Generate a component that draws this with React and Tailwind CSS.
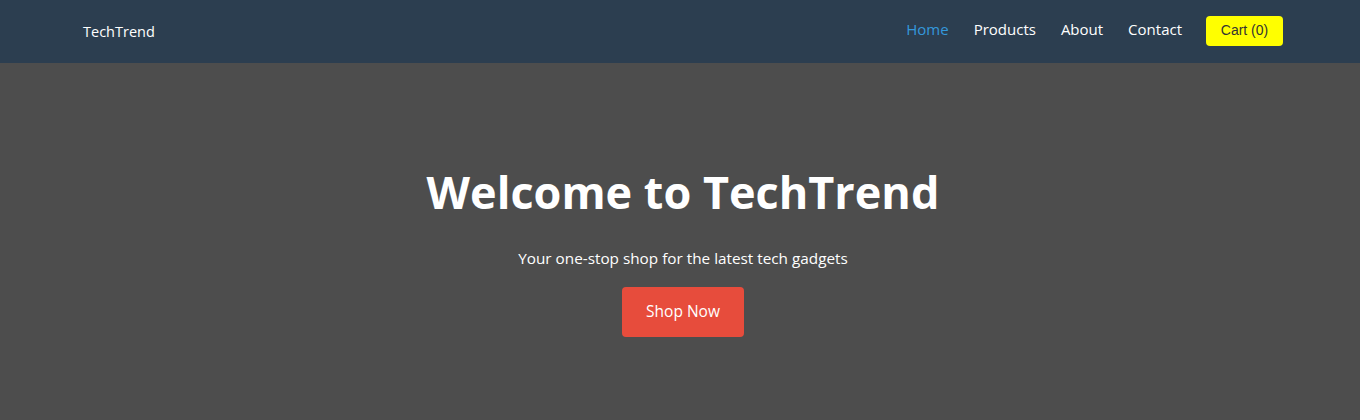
const links = ['Home', 'Products', 'About', 'Contact'];

export default function App() {
  return (
    <div className="min-h-[420px] bg-[#4d4d4d] font-['Open_Sans',sans-serif] text-white">
      <header className="h-[63px] bg-[#2c3e50]">
        <div className="mx-auto flex h-full max-w-[1200px] items-center justify-between pl-[3px]">
          <div className="pt-[1px] text-[14.5px]">TechTrend</div>
          <nav className="flex items-center pb-[2px]">
            <ul className="flex items-center gap-[25px] pb-[4px]">
              {links.map((l, i) => (
                <li key={l}>
                  <a href="#" className={i === 0 ? 'text-[15px] text-[#3498db]' : 'text-[15px] text-white'}>
                    {l}
                  </a>
                </li>
              ))}
            </ul>
            <button className="ml-[24px] mr-[-3px] h-[30px] w-[77px] rounded-[4px] bg-[#ffff00] font-['Liberation_Sans',sans-serif] text-[14px] text-[#333]">
              Cart (0)
            </button>
          </nav>
        </div>
      </header>
      <section className="flex flex-col items-center pl-[6px] pt-[99px]">
        <h1 className="text-[45px] font-bold leading-[60px]">Welcome to TechTrend</h1>
        <p className="mt-[24px] text-[15.3px] leading-[24px]">Your one-stop shop for the latest tech gadgets</p>
        <button className="mt-[17px] h-[50px] w-[122px] rounded-[4px] bg-[#e74c3c] text-[15.5px] text-white">
          Shop Now
        </button>
      </section>
    </div>
  );
}
